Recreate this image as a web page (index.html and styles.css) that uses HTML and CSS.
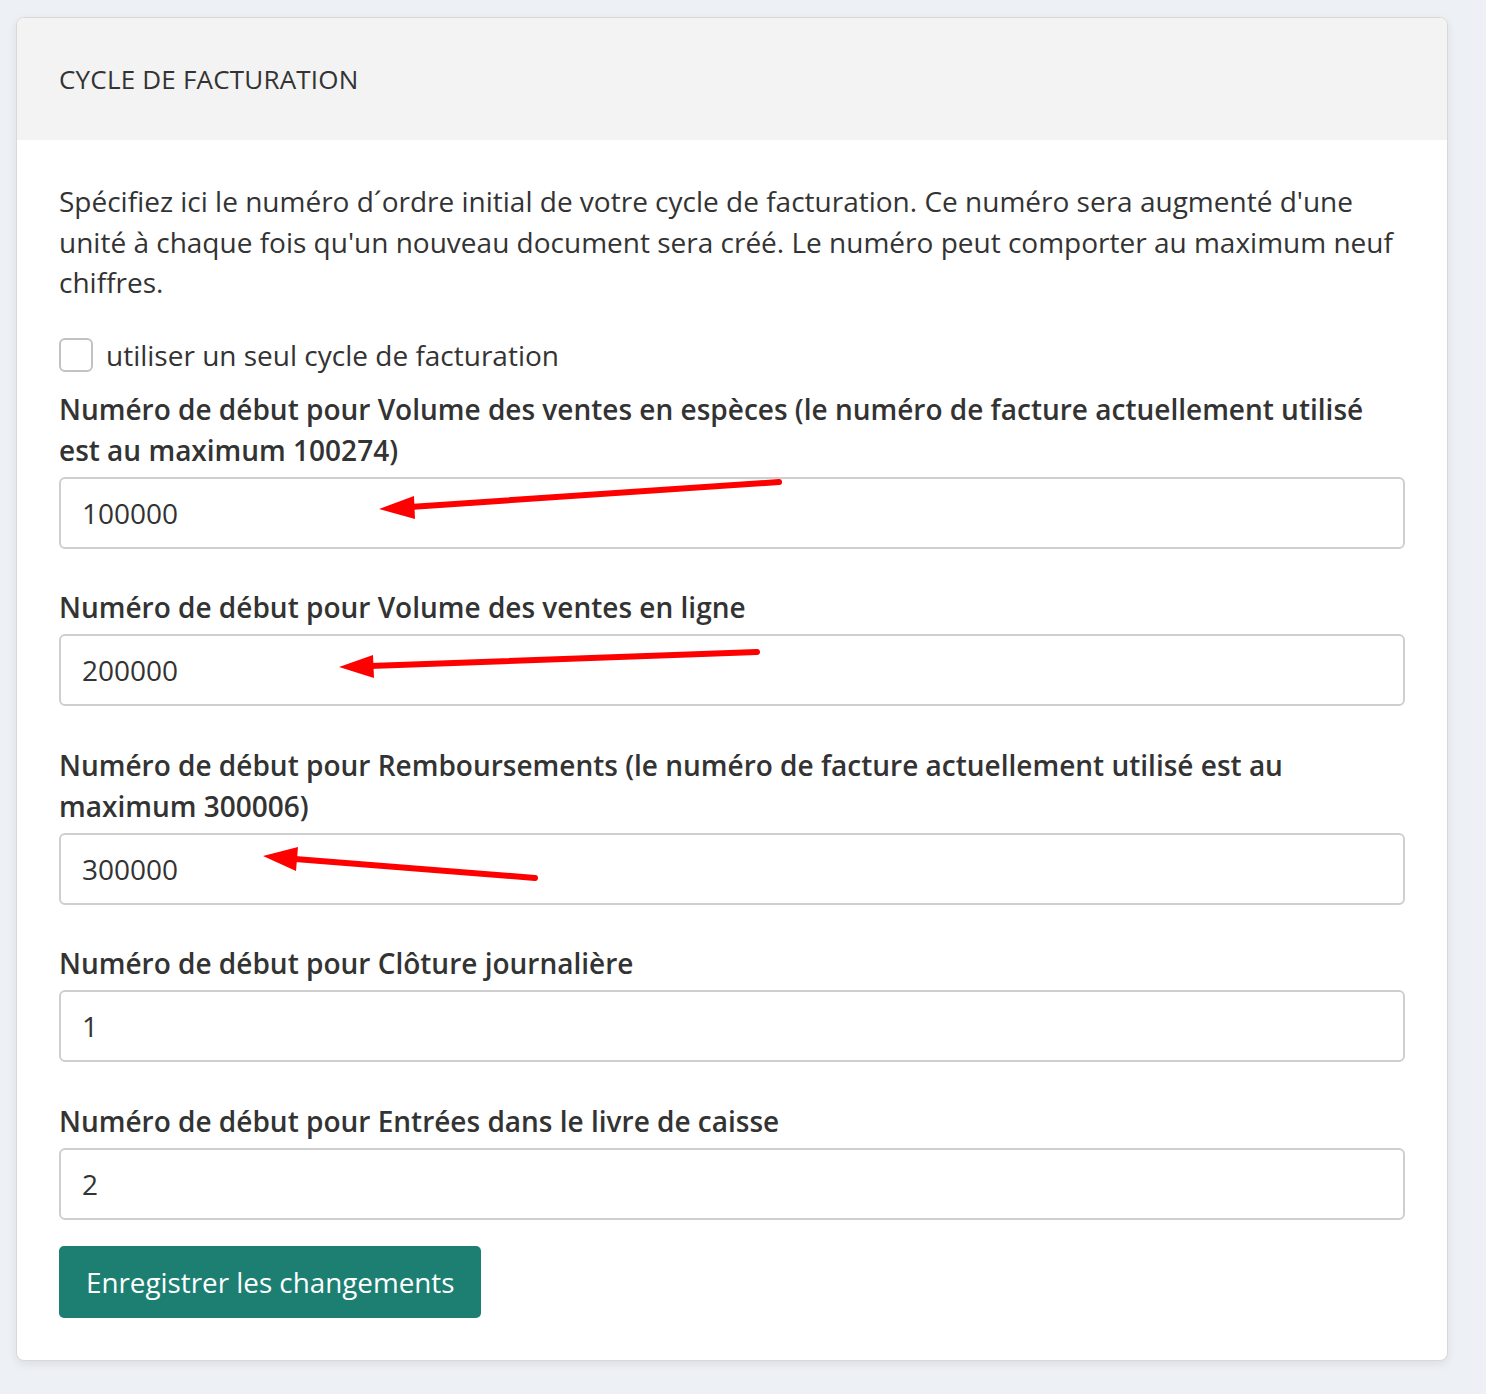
FILE: index.html
```html
<!DOCTYPE html>
<html lang="fr">
<head>
    <meta charset="UTF-8">
    <meta name="viewport" content="width=device-width, initial-scale=1.0">
    <title>Cycle de facturation</title>
    <link rel="stylesheet" href="styles.css">
</head>
<body>
    <div class="card">
        <div class="card-header">
            <h3>CYCLE DE FACTURATION</h3>
        </div>
        <div class="card-body">
            <p class="intro">Spécifiez ici le numéro d´ordre initial de votre cycle de facturation. Ce numéro sera augmenté d'une unité à chaque fois qu'un nouveau document sera créé. Le numéro peut comporter au maximum neuf chiffres.</p>

            <label class="check-row">
                <span class="checkbox"></span>
                <span>utiliser un seul cycle de facturation</span>
            </label>

            <div class="form-group">
                <label for="cash">Numéro de début pour Volume des ventes en espèces (le numéro de facture actuellement utilisé est au maximum 100274)</label>
                <input type="text" id="cash" value="100000">
            </div>

            <div class="form-group">
                <label for="online">Numéro de début pour Volume des ventes en ligne</label>
                <input type="text" id="online" value="200000">
            </div>

            <div class="form-group">
                <label for="refunds">Numéro de début pour Remboursements (le numéro de facture actuellement utilisé est au maximum 300006)</label>
                <input type="text" id="refunds" value="300000">
            </div>

            <div class="form-group">
                <label for="closing">Numéro de début pour Clôture journalière</label>
                <input type="text" id="closing" value="1">
            </div>

            <div class="form-group last">
                <label for="cashbook">Numéro de début pour Entrées dans le livre de caisse</label>
                <input type="text" id="cashbook" value="2">
            </div>

            <button class="btn-save">Enregistrer les changements</button>
        </div>
    </div>

    <!-- red annotation arrows -->
    <svg class="annotations" width="1486" height="1394" viewBox="0 0 1486 1394">
        <g stroke="#ff0000" stroke-width="6" stroke-linecap="round" fill="#ff0000">
            <line x1="779" y1="482" x2="410" y2="507" />
            <polygon stroke="none" points="379,509 414,496 415,519" />
            <line x1="757" y1="652" x2="370" y2="666" />
            <polygon stroke="none" points="339,667 373,655 374,678" />
            <line x1="535" y1="878" x2="295" y2="859" />
            <polygon stroke="none" points="263,856 298,847 296,871" />
        </g>
    </svg>
</body>
</html>
```

FILE: styles.css
```css
body {
    margin: 0;
    padding: 17px 16px;
    background-color: #edf0f4;
    font-family: 'Open Sans', sans-serif;
    color: #333333;
}

.card {
    width: 1432px;
    box-sizing: border-box;
    background: #ffffff;
    border: 1px solid #d8d8d8;
    border-radius: 8px;
    overflow: hidden;
    box-shadow: 0 3px 10px rgba(0, 0, 0, 0.08);
}

.card-header {
    background-color: #f3f3f3;
    height: 122px;
    display: flex;
    align-items: center;
    padding: 0 42px;
}

.card-header h3 {
    margin: 0;
    font-size: 26px;
    font-weight: 500;
    letter-spacing: 0.2px;
    color: #333333;
}

.card-body {
    padding: 41px 42px 42px 42px;
}

.intro {
    margin: 0 0 32px;
    font-size: 28px;
    line-height: 40.5px;
}

.check-row {
    display: flex;
    align-items: center;
    gap: 13px;
    font-size: 28px;
    line-height: 40px;
    margin-bottom: 14px;
}

.checkbox {
    width: 30px;
    height: 30px;
    border: 2px solid #c2c2c2;
    border-radius: 6px;
    background: #ffffff;
}

.form-group {
    display: flex;
    flex-direction: column;
    gap: 6px;
    margin-bottom: 38.5px;
}

.form-group.last {
    margin-bottom: 26px;
}

.form-group label {
    font-size: 28px;
    font-weight: 600;
    line-height: 41px;
}

.form-group input {
    height: 72px;
    box-sizing: border-box;
    width: 100%;
    border: 2px solid #cfcfcf;
    border-radius: 6px;
    padding: 0 21px;
    font-family: 'Open Sans', sans-serif;
    font-size: 28px;
    color: #333333;
    background: #ffffff;
}

.form-group input:focus {
    outline: none;
}

.btn-save {
    background-color: #1c7f72;
    color: #ffffff;
    border: none;
    border-radius: 5px;
    height: 72px;
    padding: 0 27px;
    font-family: 'Open Sans', sans-serif;
    font-size: 27.8px;
    cursor: pointer;
}

.annotations {
    position: absolute;
    top: 0;
    left: 0;
    pointer-events: none;
}
```
